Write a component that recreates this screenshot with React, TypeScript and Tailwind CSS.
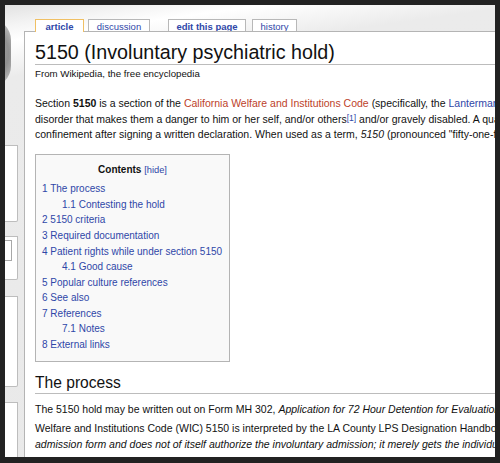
import React from "react";

const FONT = { fontFamily: '"Liberation Sans", Arial, Helvetica, sans-serif' };

const tocItems: { n: string; t: string; sub?: boolean }[] = [
  { n: "1", t: "The process" },
  { n: "1.1", t: "Contesting the hold", sub: true },
  { n: "2", t: "5150 criteria" },
  { n: "3", t: "Required documentation" },
  { n: "4", t: "Patient rights while under section 5150" },
  { n: "4.1", t: "Good cause", sub: true },
  { n: "5", t: "Popular culture references" },
  { n: "6", t: "See also" },
  { n: "7", t: "References" },
  { n: "7.1", t: "Notes", sub: true },
  { n: "8", t: "External links" },
];

export default function App() {
  return (
    <div className="w-[500px] h-[463px] bg-[#222222] pt-[5px] pl-[5px] pr-[5px] pb-[6px]" style={FONT}>
      <div className="relative w-full h-full overflow-hidden bg-[linear-gradient(172deg,#e2e2e2_0%,#f4f4f4_4%,#ffffff_7%,#ebebeb_14%,#e9e9e9_100%)]">
        {/* logo fragment */}
        <div className="absolute -left-[36px] top-[14px] w-[42px] h-[68px] rounded-full bg-[radial-gradient(circle_at_30%_50%,#9a9a9a_0%,#6e6e6e_60%,#cfcfcf_100%)] opacity-75" />
        <div className="relative flex h-full">
          {/* sidebar */}
          <div className="w-[19px] shrink-0 flex flex-col">
            <div className="mt-[140px] w-[13px] h-[84px] bg-white border-t border-r border-b border-[#bdbdbd] rounded-br-[2px]" />
            <div className="mt-[14px] w-[13px] h-[48px] bg-white border-t border-r border-b border-[#bdbdbd] rounded-br-[2px]">
              <div className="mt-[3px] w-[7px] h-[21px] bg-white border-t border-r border-b border-[#a8a8a8]" />
            </div>
            <div className="mt-[16px] w-[13px] h-[100px] bg-white border-t border-r border-b border-[#bdbdbd] rounded-br-[2px]" />
            <div className="mt-[15px] w-[13px] h-[60px] bg-white border-t border-r border-[#bdbdbd]" />
          </div>
          {/* main */}
          <div className="flex-1 flex flex-col min-w-0">
            <div className="h-[26px] flex items-end pl-[11px] text-[9.5px] leading-[11px]">
              <div className="relative z-10 w-[49px] h-[13px] -mb-px bg-white border-t border-x border-[#f0c064] flex justify-center pt-[1px] font-bold text-[#2f47a8]">
                article
              </div>
              <div className="ml-[4px] w-[62px] h-[12px] bg-white border-t border-x border-[#b8b8b8] flex justify-center pt-[1px] text-[#2f47a8]">
                discussion
              </div>
              <div className="ml-[18px] w-[78px] h-[12px] bg-white border-t border-x border-[#b8b8b8] flex justify-center pt-[1px] font-bold text-[#2f47a8]">
                edit this page
              </div>
              <div className="ml-[6px] w-[45px] h-[12px] bg-white border-t border-x border-[#b8b8b8] flex justify-center pt-[1px] text-[#2f47a8]">
                history
              </div>
            </div>
            <div className="flex-1 bg-white border-l border-t border-[#b4b4b4] pl-[10px] pt-[8px] overflow-hidden text-[#111111]">
              <h1 className="text-[19.7px] leading-[24px] border-b border-[#bcbcbc] whitespace-nowrap">
                5150 (Involuntary psychiatric hold)
              </h1>
              <div className="mt-[2px] text-[9.7px] leading-[14px] whitespace-nowrap">
                From Wikipedia, the free encyclopedia
              </div>
              <div className="mt-[15px] text-[10.5px] leading-[15.5px] whitespace-nowrap">
                <div>
                  Section <b>5150</b> is a section of the{" "}
                  <span className="text-[#bd3f2a]">California Welfare and Institutions Code</span>{" "}
                  (specifically, the <span className="text-[#2f47a8]">Lanterman–Petris–Short Act</span> or "LPS")
                </div>
                <div>
                  disorder that makes them a danger to him or her self, and/or others
                  <sup className="text-[8.5px] leading-none text-[#2f47a8] relative -top-[1.5px]">[1]</sup> and/or
                  gravely disabled. A qualified officer, which includes
                </div>
                <div>
                  confinement after signing a written declaration. When used as a term, <i>5150</i> (pronounced
                  "fifty-one-fifty") can informally
                </div>
              </div>
              <div className="mt-[11.5px] w-[195px] bg-[#f9f9f9] border border-[#b4b4b4] pt-[6.5px] pb-[8.4px] text-[10px] leading-[15.56px]">
                <div className="text-center">
                  <b>Contents</b> <span className="text-[9.3px] text-[#2f47a8]">[hide]</span>
                </div>
                <div className="mt-[3.3px] pl-[6px] text-[#2f47a8]">
                  {tocItems.map((it) => (
                    <div key={it.n} className={it.sub ? "pl-[20px] whitespace-nowrap" : "whitespace-nowrap"}>
                      {it.n} {it.t}
                    </div>
                  ))}
                </div>
              </div>
              <h2 className="mt-[11px] text-[15.6px] leading-[20px] border-b border-[#bcbcbc] whitespace-nowrap">
                The process
              </h2>
              <div className="mt-[8.3px] text-[10.5px] leading-[15.5px] whitespace-nowrap">
                The 5150 hold may be written out on Form MH 302,{" "}
                <i>Application for 72 Hour Detention for Evaluation and Treatment</i>
              </div>
              <div className="mt-[3.5px] text-[10.5px] leading-[15.5px] whitespace-nowrap">
                <div>
                  Welfare and Institutions Code (WIC) 5150 is interpreted by the LA County LPS Designation Handbook
                  to mean
                </div>
                <div>
                  <i>
                    admission form and does not of itself authorize the involuntary admission; it merely gets the
                    individual to the facility
                  </i>
                </div>
              </div>
            </div>
          </div>
        </div>
      </div>
    </div>
  );
}
